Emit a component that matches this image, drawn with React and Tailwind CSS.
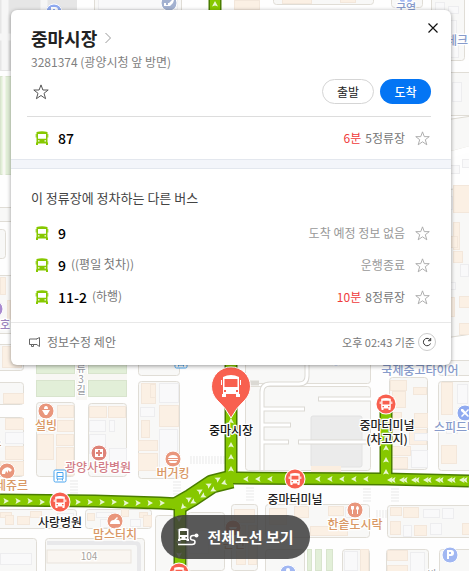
const GREEN = "#86c800";
const EDGE = "#4a7d00";

// [x, y, width, height]
const blocks = [
  [-4, 207, 20, 15], [-4, 229, 10, 30], [-4, 275, 20, 59], [-4, 344, 28, 27], [-4, 382, 28, 23], [-4, 417, 28, 60],
  [36, 402, 39, 75], [88, 403, 39, 74], [138, 344, 42, 32], [138, 381, 42, 98], [94, -4, 88, 20], [273, -4, 101, 9],
  [391, -4, 32, 12], [431, -4, 34, 65], [445, 72, 30, 44], [245, 360, 126, 24], [245, 386, 126, 85], [389, 377, 39, 93],
  [438, 360, 40, 16], [438, 381, 40, 90], [-4, 509, 81, 20], [85, 509, 67, 20], [-4, 538, 41, 40], [45, 538, 100, 40],
  [155, 515, 20, 70], [187, 512, 38, 59], [231, 504, 27, 67], [265, 504, 105, 34], [387, 505, 90, 33], [342, 549, 28, 30],
  [386, 549, 43, 30], [439, 549, 40, 30], [265, 549, 40, 30],
];

const slopedBlocks = ["445,120 472,116 472,146 445,153", "445,190 472,187 472,334 445,338"];

const greens = [
  [36, 360, 39, 14], [36, 380, 39, 17], [88, 360, 39, 14], [88, 380, 39, 17], [0, 76, 12, 99],
  [307, 549, 5, 22], [315, 549, 7, 22], [326, 549, 7, 22],
];

const cream = [
  [2, 346, 20, 22], [3, 393, 21, 11], [5, 418, 19, 12], [5, 446, 19, 14], [0, 461, 24, 15], [57, 405, 17, 13], [38, 420, 17, 12],
  [57, 420, 17, 12], [37, 434, 17, 26], [56, 434, 18, 12], [56, 447, 18, 29], [89, 406, 18, 12], [108, 406, 18, 12],
  [141, 347, 20, 15], [141, 383, 15, 21], [141, 420, 9, 18], [138, 440, 20, 11], [138, 453, 20, 18], [159, 405, 20, 22],
  [150, 384, 6, 14], [390, 380, 17, 11], [392, 391, 14, 17], [413, 387, 14, 8], [441, 382, 12, 33], [414, 413, 14, 15],
  [390, 412, 12, 18], [409, 429, 18, 16], [391, 446, 20, 10], [391, 457, 17, 12], [441, 445, 16, 19], [453, 185, 18, 28],
  [453, 222, 7, 28], [445, 236, 13, 12], [453, 251, 10, 12], [445, 297, 10, 20], [459, 296, 11, 12], [459, 323, 11, 12],
  [0, 512, 12, 6], [5, 515, 9, 10], [17, 516, 13, 9], [30, 511, 12, 7], [45, 516, 10, 9], [87, 513, 8, 8], [121, 509, 8, 8],
  [139, 512, 9, 6], [143, 515, 9, 12], [234, 509, 21, 14], [236, 525, 10, 40], [248, 525, 9, 40], [269, 508, 18, 17],
  [294, 506, 15, 12], [310, 526, 38, 10], [328, 506, 16, 10], [390, 507, 12, 9], [403, 507, 16, 11], [390, 521, 11, 14],
  [414, 525, 13, 11], [462, 523, 10, 12], [360, 549, 9, 25], [387, 550, 21, 11], [387, 565, 21, 9], [282, -2, 30, 6],
  [340, -2, 16, 5], [234, 0, 26, 10], [0, 277, 6, 18], [7, 300, 4, 20],
];

const grey = [
  [5, 432, 19, 12], [89, 420, 17, 12], [109, 420, 6, 12], [89, 434, 17, 20], [109, 448, 18, 14], [159, 383, 20, 20],
  [140, 407, 15, 10], [159, 429, 19, 40], [414, 433, 14, 8], [411, 450, 17, 18], [457, 384, 11, 20], [446, 420, 12, 14],
  [96, 512, 20, 6], [100, 519, 14, 9], [130, 519, 11, 8], [57, 513, 17, 13], [0, 553, 32, 12], [189, 530, 20, 24],
  [345, 507, 12, 11], [423, 509, 17, 9], [442, 508, 12, 11], [403, 525, 9, 12], [430, 523, 12, 12], [344, 551, 14, 20],
  [410, 552, 15, 20], [447, 165, 13, 9], [462, 159, 9, 9], [447, 196, 6, 14], [460, 264, 9, 13], [448, 282, 8, 8],
  [98, -2, 80, 12], [435, 2, 10, 14], [448, 6, 11, 8], [435, 20, 22, 16], [447, 44, 12, 14], [452, 82, 10, 20],
];

const routes = [
  "M0 500 L95 501 L160 503 L179 504 Q186 504 193 498 L214 483 Q220 478 231 478 L386 479 L469 481",
  "M231 360 V478", "M180 504 V575", "M386 405 V479", "M215 -4 V14",
];

const Arrow = ({ x, y, rotate = 0 }) => (
  <path d="M0 -3 L3 2.5 L0 1.5 L-3 2.5 Z" fill="#e8f7cf" transform={`translate(${x} ${y}) rotate(${rotate})`} />
);

const arrows = [
  ...[6, 18, 30, 42, 78, 90, 102, 114, 126, 138, 150, 162].map((x) => [x, 501 + Math.round(x / 80), 90]),
  ...[246, 258, 270, 318, 330, 342, 354, 366].map((x) => [x, 479, -90]),
  ...[390, 393, 402, 405, 414, 417, 426, 429, 438, 441, 450, 453, 462, 465].map((x) => [x, 480, -90]),
  ...[421, 445, 457, 469].map((y) => [231, y, 0]),
  ...[448, 460, 472].map((y) => [386, y, 0]),
  ...[519, 531, 543, 555].map((y) => [179, y, 180]),
  [215, 4, 0], [183, 507, 225], [189, 499, 60], [200, 491, 60], [209, 485, 60], [218, 479, 60],
  [224, 483, -110], [213, 490, -120], [203, 496, -120], [193, 502, -120],
];

const Stop = ({ x, y }) => (
  <g transform={`translate(${x} ${y})`}>
    <circle r="10.5" fill="#fff" />
    <circle r="9.5" fill="#f8604f" />
    <path fillRule="evenodd" fill="#fff" d="M-4.8 -5.2 Q0 -6.6 4.8 -5.2 V4.5 H4.5 V6 H2.5 V4.5 H-2.5 V6 H-4.5 V4.5 H-4.8 Z M-3.5 -3.2 H3.5 V0.6 H-3.5 Z M-3.5 2 H-2 V3.3 H-3.5 Z M2 2 H3.5 V3.3 H2 Z" />
    <path d="M-5.8 -2.5 V0 M5.8 -2.5 V0" stroke="#fff" />
  </g>
);

const SmallStop = ({ x, y }) => (
  <g transform={`translate(${x} ${y})`} fill="none" stroke="#4aa5ef">
    <rect x="-6" y="-6" width="12" height="12" rx="1.5" fill="#fff" />
    <path d="M-3 3 V-3.5 H3 V3 Z M-3 0.5 H3 M-2.5 3 V4.5 M2.5 3 V4.5" />
  </g>
);

const Place = ({ x, y, color = "#e9967c", children }) => (
  <g transform={`translate(${x} ${y})`}>
    <circle r="8" fill={color} stroke="#fff" strokeWidth="1" />
    <g fill="#fff" stroke="none">{children}</g>
  </g>
);

const Label = ({ x, y, color = "#d99865", anchor = "middle", size = 12, weight = 500, children }) => (
  <text x={x} y={y} fill={color} fontSize={size} fontWeight={weight} textAnchor={anchor} stroke="#fff" strokeWidth="2.5" strokeLinejoin="round" paintOrder="stroke">
    {children}
  </text>
);

const Rects = ({ items, fill, stroke, rx }) =>
  items.map(([x, y, w, h], i) => <rect key={i} x={x + 0.5} y={y + 0.5} width={w - 1} height={h - 1} rx={rx} fill={fill} stroke={stroke} />);

const Crosswalk = ({ x, y, vertical }) => (
  <path d={vertical ? "M0 0 V8 M3 0 V8 M6 0 V8 M9 0 V8" : "M0 0 H8 M0 3 H8 M0 6 H8 M0 9 H8 M0 12 H8"} stroke="#e9e9e9" transform={`translate(${x} ${y})`} />
);

const MapCanvas = () => (
  <svg viewBox="0 0 469 571" preserveAspectRatio="xMinYMin slice" className="absolute inset-0 h-full w-full" aria-hidden="true">
    <rect width="469" height="571" fill="#fefefe" />
    <rect width="77" height="71" fill="#e6e6e6" />
    <path d="M5 0 V70 M44 0 V12 M0 37 H12" stroke="#f6f6f6" strokeWidth="7" />
    <Rects items={blocks} fill="#f8f8f7" stroke="#e0ddd6" rx={3} />
    {slopedBlocks.map((points) => <polygon key={points} points={points} fill="#f8f8f7" stroke="#dddad2" />)}
    <Rects items={greens} fill="#e2efd8" stroke="#d8e4cd" rx={0} />
    <path d="M4 76 V175" stroke="#f8f8f3" strokeWidth="3" />
    <rect x="76" y="360" width="11" height="40" fill="#f8f7f4" />
    <rect x="36" y="374" width="91" height="6" fill="#f8f7f4" />
    <Rects items={cream} fill="#fbf0e4" stroke="#f3e7db" rx={0} />
    <Rects items={grey} fill="#f9f9fa" stroke="#ededef" rx={0} />

    <rect x="311" y="416" width="51" height="51" rx="2" fill="#ebebeb" stroke="#e2e2e2" />
    <rect x="311" y="466" width="30" height="8" fill="#fbeee0" />
    <g fill="none" strokeLinejoin="round">
      <path d="M262 470 V392 Q262 384 270 384 H299 Q307 384 307 376 V362 M262 409 H305 M262 425 H291 M262 442 H289 M298 442 H370 M318 399 H370 M245 383 H259" stroke="#dbd9d4" strokeWidth="5" />
      <path d="M262 470 V392 Q262 384 270 384 H299 Q307 384 307 376 V362 M262 409 H304 M262 425 H290 M262 442 H288 M299 442 H371 M319 399 H371" stroke="#fff" strokeWidth="3" />
      <path d="M47 543 H135 Q139 543 139 547 V571" stroke="#e8e8ea" strokeWidth="4" />
    </g>
    <path d="M445 156 L470 149" stroke="#fff" strokeWidth="6" />
    <rect x="47" y="550" width="84" height="13" fill="#faf6f1" stroke="#e9e3dc" />
    <Crosswalk x={70} y={481} />
    <Crosswalk x={173} y={482} />
    <Crosswalk x={246} y={488} />
    <Crosswalk x={363} y={489} />
    <Crosswalk x={391} y={489} />
    <Crosswalk x={377} y={510} vertical />
    <Crosswalk x={191} y={456} vertical />
    <Crosswalk x={203} y={456} vertical />
    <Crosswalk x={215} y={456} vertical />

    <g fill="none" strokeLinejoin="round">
      {routes.map((d) => <path key={d} d={d} stroke={EDGE} strokeWidth="13" />)}
      <path d="M177 506 L191 498 L212 484 L232 479" stroke={EDGE} strokeWidth="19" />
      {routes.map((d) => <path key={d} d={d} stroke={GREEN} strokeWidth="10" />)}
      <path d="M177 506 L191 498 L212 484 L232 479" stroke={GREEN} strokeWidth="16" />
      <path d="M172 504 L182 504 M180 500 V518 M226 478 H240 M231 470 V482" stroke={GREEN} strokeWidth="10" />
    </g>
    {arrows.map(([x, y, rotate], i) => <Arrow key={i} x={x} y={y} rotate={rotate} />)}

    <Place x={54} y={12} color="#8faaf0"><path fillRule="evenodd" d="M-3 5 V-5 H1 A3 3 0 0 1 1 1 H-1 V5 Z M-1 -3 H1 V-1 H-1 Z" /></Place>
    <Place x={169} y={3} color="#a3b1d0"><path d="M-5 3 V0 H-3 V2 H-1 V0 H0 L3 -3 H5 L4 0 L1 3 Z" /></Place>
    <Place x={406} y={-4} color="#a1b7f2"><circle cy="5" r="1.5" /></Place>
    <Place x={-5} y={309} color="#a98bd0" />
    <Place x={46} y={411}><path d="M-4 -1 H4 L1 4 H-1 Z M-2 -2 A2 3 0 0 1 2 -2 Z" /></Place>
    <Place x={99} y={453} color="#de8378"><path fillRule="evenodd" d="M-4 -4 H4 V4 H-4 Z M-1 -3 V-1 H-3 V1 H-1 V3 H1 V1 H3 V-1 H1 V-3 Z" /></Place>
    <Place x={173} y={459}><path d="M-5 -1 Q-4 -4 0 -4 Q4 -4 5 -1 Z M-5 0 H5 V1 H-5 Z M-4 2 H4 Q4 4 2 4 H-2 Q-4 4 -4 2 Z" /></Place>
    <Place x={7} y={471}><path d="M-5 3 Q-6 -1 -2 -3 Q2 -5 5 -1 L3 1 L1 -1 L1 2 L-1 0 L-2 3 Z" /></Place>
    <Place x={115} y={521}><path d="M-5 3 Q-5 -1 -1 -1 L2 -4 L3 -3 L1 -1 Q5 -2 5 3 Z" /></Place>
    <Place x={355} y={510}><path d="M-4 -4 H-1 V-1 L-2 0 V4 H-3 V0 L-4 -1 Z M2 -4 Q4 -4 4 -1 L3 0 V4 H2 V0 L1 -1 Q1 -3 2 -4 Z" /></Place>
    <Place x={233} y={528}><path d="M-4 -1 H4 L3 1 H-3 Z" /></Place>
    <Place x={336} y={358} color="#a1b7f2" />
    <Place x={465} y={413} color="#8faaf0"><path d="M-4 -4 L-2 -4 L4 3 L3 4 L-4 -2 Z M-4 3 L3 -4 L4 -3 L-3 4 Z" /></Place>
    <Place x={450} y={555} color="#a1b7f2"><path fillRule="evenodd" d="M-3 4 V-5 H1 A3 3 0 0 1 1 1 H-1 V4 Z M-1 -3 H1 V-1 H-1 Z" /></Place>
    <Place x={288} y={573} color="#a1b7f2"><circle cy="-3" r="2" /></Place>

    <Label x={46} y={430}>설빙</Label>
    <Label x={98} y={472} color="#d17c86">광양사랑병원</Label>
    <Label x={173} y={478}>버거킹</Label>
    <Label x={28} y={490} anchor="end">레쥬르</Label>
    <Label x={115} y={539}>맘스터치</Label>
    <Label x={355} y={529}>한솥도시락</Label>
    <Label x={234} y={548}>본선</Label>
    <Label x={420} y={375} color="#879bcb">국제중고타이어</Label>
    <Label x={434} y={432} color="#879bcb" anchor="start">스피드메</Label>
    <Label x={406} y={12} color="#879bcb" size={11}>구역</Label>
    <Label x={468} y={45} color="#879bcb" anchor="end">테크</Label>
    <Label x={5} y={329} color="#9b83bd" size={11}>호</Label>
    <Label x={-4} y={447} color="#c99a45">스</Label>
    <Label x={89} y={560} color="#aaa49e" size={10} weight={400}>104</Label>
    <Label x={81} y={372} color="#95979e" size={10} weight={400}>류</Label>
    <Label x={81} y={383} color="#95979e" size={10} weight={400}>3</Label>
    <Label x={81} y={394} color="#95979e" size={10} weight={400}>길</Label>
    <Label x={432} y={578} color="#95979e" size={10} weight={400}>발</Label>

    <SmallStop x={60} y={476} />
    <SmallStop x={181} y={362} />
    <Stop x={60} y={502} />
    <Stop x={295} y={479} />
    <Stop x={386} y={404} />
    <Stop x={179} y={573} />
    <Label x={60} y={527} color="#222">사랑병원</Label>
    <Label x={295} y={504} color="#222">중마터미널</Label>
    <Label x={387} y={430} color="#222">중마터미널</Label>
    <Label x={387} y={444} color="#222">(차고지)</Label>

    <path d="M231 418 Q226 408 217 400 A19.5 19.5 0 1 1 245 400 Q236 408 231 418 Z" fill="#f8604f" stroke="#fff" />
    <path fillRule="evenodd" fill="#fff" d="M223 377 Q231 373 239 377 V394 H240 V397 H236 V394 H226 V397 H222 V394 H223 Z M224.500 379 H237.500 V387 H224.500 Z M224 390 H226 V392 H224 Z M236 390 H238 V392 H236 Z" />
    <path d="M221.500 380 V385 M240.500 380 V385" stroke="#fff" />
    <Label x={231} y={435} color="#111">중마시장</Label>
  </svg>
);

const BusIcon = () => (
  <svg viewBox="0 0 14 14" className="h-3.5 w-3.5 shrink-0" aria-hidden="true">
    <path fillRule="evenodd" fill={GREEN} d="M1.500 1 Q7 -0.500 12.500 1 V11.500 H13 V14 H11 V12.500 H3 V14 H1 V11.500 H1.500 Z M3 3 H11 V7.800 H3 Z M3 9.300 H4.500 V10.500 H3 Z M9.500 9.300 H11 V10.500 H9.500 Z" />
    <path d="M1.200 3 V6.500 M12.800 3 V6.500" stroke={GREEN} />
  </svg>
);

const StarIcon = ({ className }) => (
  <svg viewBox="0 0 16 16" fill="none" stroke="currentColor" className={className} aria-hidden="true">
    <path d="M8 0.900 L9.900 6 H15.200 L11 9.300 L12.600 14.700 L8 11.500 L3.400 14.700 L5 9.300 L0.800 6 H6.100 Z" />
  </svg>
);

const BusRow = ({ bus }) => (
  <li className="flex h-8 items-center pr-[21px] pl-6">
    <BusIcon />
    <span className="ml-[9px] text-sm leading-5 font-medium text-black">{bus.name}</span>
    <span className="ml-[5px] pb-0.5 text-xs text-[#777]">{bus.note}</span>
    <span className="ml-auto text-xs text-[#777]">
      {bus.minutes && <span className="mr-1 text-[#f03b3b]">{bus.minutes}</span>}
      {bus.status}
    </span>
    <button type="button" aria-label="즐겨찾기" className="ml-2.5 text-[#aaa]">
      <StarIcon className="h-[15px] w-[15px]" />
    </button>
  </li>
);

const mainBus = { name: "87", minutes: "6분", status: "5정류장" };

const otherBuses = [
  { name: "9", status: <span className="text-[#999]">도착 예정 정보 없음</span> },
  { name: "9", note: "((평일 첫차))", status: <span className="text-[#999]">운행종료</span> },
  { name: "11-2", note: "(하행)", minutes: "10분", status: "8정류장" },
  {},
];

const StopCard = () => (
  <section className="relative mt-2.5 mr-[18px] ml-[11px] overflow-hidden rounded-md bg-white shadow-[0_1px_4px_rgba(0,0,0,0.4)]">
    <header className="mr-5 ml-4 border-b border-[#ddd] pt-3.5 pb-3">
      <div className="flex items-center pl-1">
        <h1 className="text-lg leading-7 font-bold text-[#222]">
          <a href="#stop" className="flex items-center gap-2">
            중마시장
            <svg viewBox="0 0 6 12" fill="none" stroke="#999" className="h-3 w-1.5" aria-hidden="true">
              <path d="M0.500 1 L5.500 6 L0.500 11" />
            </svg>
          </a>
        </h1>
      </div>
      <p className="pl-1 text-xs leading-5 text-[#808080]">3281374 (광양시청 앞 방면)</p>
      <div className="mt-[7px] flex items-center gap-1.5 pl-1.5">
        <button type="button" aria-label="즐겨찾기" className="mr-auto text-[#555]">
          <StarIcon className="h-4 w-4" />
        </button>
        <button type="button" className="h-[25px] w-[52px] rounded-full border border-[#d5d5d5] text-xs text-[#222]">출발</button>
        <button type="button" className="h-[25px] w-[51px] rounded-full bg-[#0475f4] text-xs font-medium text-white">도착</button>
      </div>
    </header>
    <button type="button" aria-label="닫기" className="absolute top-[11px] right-[11px] p-0.5">
      <svg viewBox="0 0 10 10" stroke="#111" strokeWidth="1.200" className="h-2.5 w-2.5" aria-hidden="true">
        <path d="M0.500 0.500 L9.500 9.500 M9.500 0.500 L0.500 9.500" />
      </svg>
    </button>
    <ul className="py-[5px]">
      <BusRow bus={mainBus} />
    </ul>
    <div className="h-2.5 border-y border-[#e3e7ee] bg-[#f3f5fa]" />
    <h2 className="px-5 pt-[19px] pb-[9px] text-[13px] leading-5 text-[#444]">이 정류장에 정차하는 다른 버스</h2>
    <ul className="h-[105px] overflow-hidden">
      {otherBuses.map((bus, i) => (
        <BusRow key={i} bus={bus} />
      ))}
    </ul>
    <footer className="flex h-[43px] items-center justify-between border-t border-[#e8e8e8] pr-[15px] pb-1 pl-[18px]">
      <button type="button" className="flex items-center gap-[7px] text-xs text-[#777]">
        <svg viewBox="0 0 11 11" fill="none" stroke="#666" className="h-[11px] w-[11px]" aria-hidden="true">
          <path d="M8 2 H0.500 V7.500 H8 M7.500 2 L10.500 0.500 V9.500 L7.500 7.500 M2.500 7.500 V9.500 H4.500 V7.500" />
        </svg>
        정보수정 제안
      </button>
      <div className="flex items-center gap-[3px] text-[11px] text-[#777]">
        오후 02:43 기준
        <button type="button" aria-label="새로고침" className="flex h-[18px] w-[18px] items-center justify-center rounded-full border border-[#ccc]">
          <svg viewBox="0 0 10 10" fill="none" stroke="#333" className="h-2.5 w-2.5" aria-hidden="true">
            <path d="M8.500 6.500 A3.700 3.700 0 1 1 7.800 2.500 L8.500 3.300 M8.700 1 V3.700 H6" />
          </svg>
        </button>
      </div>
    </footer>
  </section>
);

const App = () => (
  <main className="relative flex h-screen flex-col items-stretch overflow-hidden font-['Noto_Sans_CJK_KR','Noto_Sans',sans-serif]">
    <MapCanvas />
    <StopCard />
    <button type="button" className="relative mt-auto mb-3 ml-0.5 flex h-11 items-center gap-2 self-center rounded-full bg-[#3c3c3c]/85 px-4 text-[15px] font-bold text-white">
      <svg viewBox="0 0 22 20" fill="none" className="h-5 w-[22px]" aria-hidden="true">
        <path fillRule="evenodd" fill="#fff" d="M1.500 2 Q6.500 0 11.500 2 V12 H12 V14 H9.500 V13 H3.500 V14 H1 V12 H1.500 Z M3 4 H10 V8 H3 Z M3 10 H4.500 V11.500 H3 Z M8.500 10 H10 V11.500 H8.500 Z" />
        <path d="M1 17.500 H15 Q18 17.500 18 15 Q18 13 15.500 13 Q13.500 13 13.500 11 Q13.500 8.500 16 8.500 H19" stroke="#fff" strokeWidth="1.500" />
        <circle cx="19.500" cy="8.500" r="2" fill="#fff" />
      </svg>
      전체노선 보기
    </button>
  </main>
);

export default App;
